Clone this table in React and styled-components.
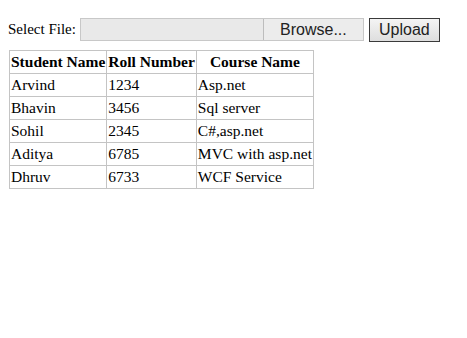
import styled, { createGlobalStyle } from 'styled-components';

const GlobalStyle = createGlobalStyle`
    body {
        margin: 8px;
        background: #fff;
        font-family: "Liberation Serif", "Times New Roman", serif;
        font-size: 15px;
        color: #000;
    }
`;

const UploadRow = styled.div`
    display: flex;
    align-items: center;
    height: 25px;
    margin-top: 9px;
`;

const FileLabel = styled.span`
    margin-right: 4px;
`;

const FileBox = styled.div`
    display: flex;
    height: 23px;
    border: 1px solid #c8c8c8;
    box-sizing: border-box;
`;

const FileName = styled.div`
    width: 182px;
    background: #e9e9e9;
`;

const BrowseButton = styled.div`
    width: 99px;
    background: #ececec;
    border-left: 1px solid #bdbdbd;
    display: flex;
    align-items: center;
    justify-content: center;
    font-family: "Liberation Sans", Arial, sans-serif;
    font-size: 16px;
    color: #222;
`;

const UploadButton = styled.button`
    margin-left: 5px;
    width: 71px;
    height: 24px;
    padding: 0;
    border: 1px solid #3a3a3a;
    background: linear-gradient(#f4f4f4, #dedede);
    font-family: "Liberation Sans", Arial, sans-serif;
    font-size: 16px;
    color: #222;
`;

const Grid = styled.table`
    margin-top: 8px;
    margin-left: 1px;
    border-collapse: collapse;
    border: 1px solid #a0a0a0;
    font-size: 15.5px;
`;

const HeadCell = styled.th`
    border: 1px solid #c4c4c4;
    padding: 0 1px;
    height: 22px;
    font-weight: bold;
    text-align: center;
    white-space: nowrap;
`;

const Cell = styled.td`
    border: 1px solid #c4c4c4;
    padding: 0 1px;
    height: 22px;
    white-space: nowrap;
`;

const students = [
    { name: 'Arvind', roll: '1234', course: 'Asp.net' },
    { name: 'Bhavin', roll: '3456', course: 'Sql server' },
    { name: 'Sohil', roll: '2345', course: 'C#,asp.net' },
    { name: 'Aditya', roll: '6785', course: 'MVC with asp.net' },
    { name: 'Dhruv', roll: '6733', course: 'WCF Service' }
];

export default function App() {
    return (
        <>
            <GlobalStyle />
            <UploadRow>
                <FileLabel>Select File:</FileLabel>
                <FileBox>
                    <FileName />
                    <BrowseButton>Browse...</BrowseButton>
                </FileBox>
                <UploadButton>Upload</UploadButton>
            </UploadRow>
            <Grid>
                <thead>
                    <tr>
                        <HeadCell>Student Name</HeadCell>
                        <HeadCell>Roll Number</HeadCell>
                        <HeadCell>Course Name</HeadCell>
                    </tr>
                </thead>
                <tbody>
                    {students.map(s => (
                        <tr key={s.roll}>
                            <Cell>{s.name}</Cell>
                            <Cell>{s.roll}</Cell>
                            <Cell>{s.course}</Cell>
                        </tr>
                    ))}
                </tbody>
            </Grid>
        </>
    );
}
